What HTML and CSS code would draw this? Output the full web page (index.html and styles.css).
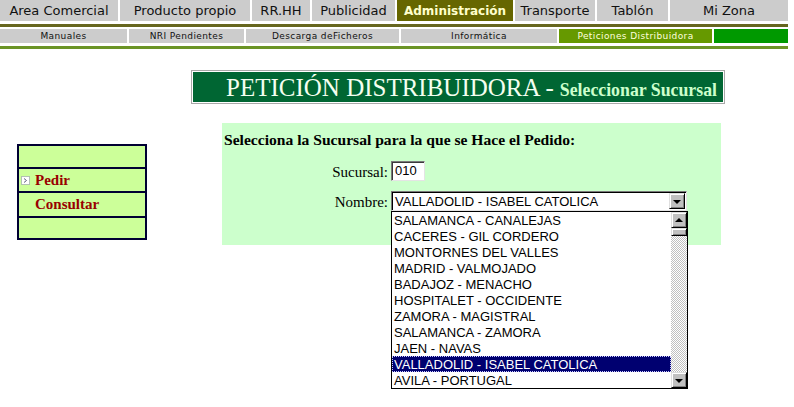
FILE: index.html
```html
<!DOCTYPE html>
<html lang="es">
<head>
<meta charset="utf-8">
<title>Petición Distribuidora</title>
<link rel="stylesheet" href="styles.css">
</head>
<body>
<div class="topnav">
  <div class="tab t1">Area Comercial</div>
  <div class="tab t2">Producto propio</div>
  <div class="tab t3">RR.HH</div>
  <div class="tab t4">Publicidad</div>
  <div class="tab t5 active">Administración</div>
  <div class="tab t6">Transporte</div>
  <div class="tab t7">Tablón</div>
  <div class="tab t8">Mi Zona</div>
</div>
<div class="rule rule1"></div>
<div class="subnav">
  <div class="sub s1">Manuales</div>
  <div class="sub s2">NRI Pendientes</div>
  <div class="sub s3">Descarga deFicheros</div>
  <div class="sub s4">Informática</div>
  <div class="sub s5 active">Peticiones Distribuidora</div>
  <div class="sub s6 green"></div>
</div>
<div class="rule rule2"></div>

<div class="title-wrap">
  <div class="title"><span class="t-main">PETICIÓN DISTRIBUIDORA - </span><span class="t-sub">Seleccionar Sucursal</span></div>
</div>

<div class="content">
  <div class="menu">
    <div class="mrow h1"></div>
    <div class="mrow h2 with-icon">
      <svg class="micon" width="9" height="9" viewBox="0 0 9 9"><rect x="0.5" y="0.5" width="8" height="8" fill="#fff" stroke="#8080a0" stroke-dasharray="1 1"/><polyline points="3,2.5 5.5,4.5 3,6.5" fill="none" stroke="#606080" stroke-width="1"/></svg>
      <span>Pedir</span>
    </div>
    <div class="mrow h3">Consultar</div>
    <div class="mrow h4"></div>
  </div>

  <div class="formbox">
    <div class="fhead">Selecciona la Sucursal para la que se Hace el Pedido:</div>
    <div class="frow r-suc">
      <span class="flabel">Sucursal:</span>
      <div class="input">010</div>
    </div>
    <div class="frow r-nom">
      <span class="flabel">Nombre:</span>
      <div class="select">
        <span class="sel-text">VALLADOLID - ISABEL CATOLICA</span>
        <div class="sbtn sel-btn"><span class="arr-down"></span></div>
        <div class="list">
          <div class="items">
            <div class="item">SALAMANCA - CANALEJAS</div>
            <div class="item">CACERES - GIL CORDERO</div>
            <div class="item">MONTORNES DEL VALLES</div>
            <div class="item">MADRID - VALMOJADO</div>
            <div class="item">BADAJOZ - MENACHO</div>
            <div class="item">HOSPITALET - OCCIDENTE</div>
            <div class="item">ZAMORA - MAGISTRAL</div>
            <div class="item">SALAMANCA - ZAMORA</div>
            <div class="item">JAEN - NAVAS</div>
            <div class="item selected">VALLADOLID - ISABEL CATOLICA</div>
            <div class="item">AVILA - PORTUGAL</div>
          </div>
          <div class="scrollbar">
            <div class="sbtn"><span class="arr-up"></span></div>
            <div class="thumb"></div>
            <div class="track"></div>
            <div class="sbtn"><span class="arr-down"></span></div>
          </div>
        </div>
      </div>
    </div>
  </div>
</div>
</body>
</html>
```
FILE: styles.css
```css
html, body {
  margin: 0;
  padding: 0;
  background: #ffffff;
}
body {
  width: 794px;
  height: 407px;
  overflow: hidden;
  font-family: "Liberation Serif", "Times New Roman", serif;
  color: #000;
}

/* top navigation */
.topnav {
  display: flex;
  gap: 2px;
  height: 21px;
  margin-bottom: 3px;
  font-family: "DejaVu Sans", Verdana, sans-serif;
  font-size: 13px;
}
.tab {
  background: #cccccc;
  color: #111;
  display: flex;
  align-items: center;
  justify-content: center;
  white-space: nowrap;
}
.tab.active {
  background: #666600;
  color: #ffffcc;
  font-weight: bold;
  font-size: 12px;
}
.t1 { width: 118px; }
.t2 { width: 130px; }
.t3 { width: 58px; }
.t4 { width: 83px; }
.t5 { width: 116px; }
.t6 { width: 80px; }
.t7 { width: 71px; }
.t8 { width: 118px; }

.rule {
  width: 788px;
  height: 3px;
}
.rule1 {
  background: #66661f;
  margin-bottom: 2px;
}
.rule2 {
  background: #6b9426;
}

.subnav {
  display: flex;
  gap: 2px;
  height: 14px;
  margin-bottom: 3px;
  font-family: "DejaVu Sans", Verdana, sans-serif;
  font-size: 9px;
  letter-spacing: 0.4px;
}
.sub {
  background: #cccccc;
  color: #111;
  display: flex;
  align-items: center;
  justify-content: center;
  white-space: nowrap;
}
.sub.active {
  background: #669900;
  color: #ffffdd;
}
.sub.green {
  background: #009900;
}
.s1 { width: 127px; }
.s2 { width: 115px; }
.s3 { width: 153px; }
.s4 { width: 156px; }
.s5 { width: 153px; }
.s6 { width: 74px; }

/* title */
.title-wrap {
  margin: 21px 0 0 191px;
  width: 534px;
  box-sizing: border-box;
  border: 1px solid #a8a8a8;
  padding: 1px;
}
.title {
  background: #006633;
  height: 30px;
  display: flex;
  align-items: center;
  padding-left: 33px;
  white-space: nowrap;
}
.t-main {
  color: #f4fff0;
  font-size: 25px;
  line-height: 26px;
  padding-top: 1px;
}
.t-sub {
  color: #ccffcc;
  font-size: 17.8px;
  font-weight: bold;
  line-height: 24px;
  padding-top: 5px;
  margin-left: 6px;
}

/* content */
.content {
  display: flex;
  align-items: flex-start;
}

.menu {
  margin: 40px 0 0 17px;
  width: 130px;
  box-sizing: border-box;
  border: 2px solid #000033;
  background: #ccff99;
}
.mrow {
  display: flex;
  align-items: center;
  padding-left: 16px;
  border-bottom: 2px solid #000033;
  color: #990000;
  font-weight: bold;
  font-size: 15px;
}
.mrow.h1 { height: 21px; }
.mrow.h2 { height: 22px; }
.mrow.h3 { height: 23px; }
.mrow.h4 { height: 20px; border-bottom: 0; }
.mrow.with-icon {
  padding-left: 2px;
}
.micon {
  margin-right: 5px;
  flex: none;
}

.formbox {
  margin: 19px 0 0 75px;
  width: 499px;
  height: 122px;
  box-sizing: border-box;
  padding: 8px 0 0 2px;
  background: #ccffcc;
}
.fhead {
  font-weight: bold;
  font-size: 15.6px;
  line-height: 18px;
  white-space: nowrap;
}
.frow {
  display: flex;
  align-items: center;
  height: 20px;
}
.r-suc { margin-top: 12px; }
.r-nom { margin-top: 10px; }
.flabel {
  width: 164px;
  margin-right: 3px;
  text-align: right;
  font-size: 15px;
  line-height: 20px;
  padding-top: 2px;
}

.input {
  width: 34px;
  height: 20px;
  box-sizing: border-box;
  background: #fff;
  border: 1px solid;
  border-color: #7a7a7a #e4e4e4 #e4e4e4 #7a7a7a;
  box-shadow: inset 1px 1px #3a3a3a;
  font-family: "Liberation Sans", Arial, sans-serif;
  font-size: 13px;
  line-height: 18px;
  padding-left: 3px;
}

.select {
  position: relative;
  width: 296px;
  height: 20px;
  box-sizing: border-box;
  background: #fff;
  border: 1px solid;
  border-color: #7a7a7a #e4e4e4 #e4e4e4 #7a7a7a;
  box-shadow: inset 1px 1px #000;
  font-family: "Liberation Sans", Arial, sans-serif;
  font-size: 13px;
  display: flex;
  align-items: center;
}
.sel-text {
  flex: 1;
  padding-left: 3px;
  line-height: 18px;
  padding-top: 1px;
}
.sel-btn {
  margin-right: 1px;
}

.sbtn {
  width: 16px;
  height: 16px;
  box-sizing: border-box;
  flex: none;
  background: #c0c0c0;
  border: 1px solid;
  border-color: #dfdfdf #000 #000 #dfdfdf;
  box-shadow: inset 1px 1px #fff, inset -1px -1px #808080;
  display: flex;
  align-items: center;
  justify-content: center;
}
.arr-down {
  width: 0;
  height: 0;
  border-left: 4px solid transparent;
  border-right: 4px solid transparent;
  border-top: 4px solid #000;
  margin-top: 1px;
}
.arr-up {
  width: 0;
  height: 0;
  border-left: 4px solid transparent;
  border-right: 4px solid transparent;
  border-bottom: 4px solid #000;
  margin-bottom: 1px;
}

.list {
  position: absolute;
  top: 19px;
  left: -1px;
  width: 297px;
  box-sizing: border-box;
  border: 1px solid #000;
  background: #fff;
  display: flex;
  z-index: 2;
}
.items {
  flex: 1;
}
.item {
  height: 16px;
  line-height: 17px;
  padding-left: 2px;
  white-space: nowrap;
  color: #000;
}
.item.selected {
  background: #000070;
  color: #fff;
  outline: 1px dotted #c8c8ff;
  outline-offset: -1px;
}
.scrollbar {
  width: 16px;
  display: flex;
  flex-direction: column;
}
.thumb {
  height: 8px;
  box-sizing: border-box;
  background: #c0c0c0;
  border: 1px solid;
  border-color: #dfdfdf #000 #000 #dfdfdf;
  box-shadow: inset 1px 1px #fff, inset -1px -1px #808080;
}
.track {
  flex: 1;
  background: repeating-conic-gradient(#c0c0c0 0 25%, #ffffff 0 50%) 0 0 / 2px 2px;
}
```
